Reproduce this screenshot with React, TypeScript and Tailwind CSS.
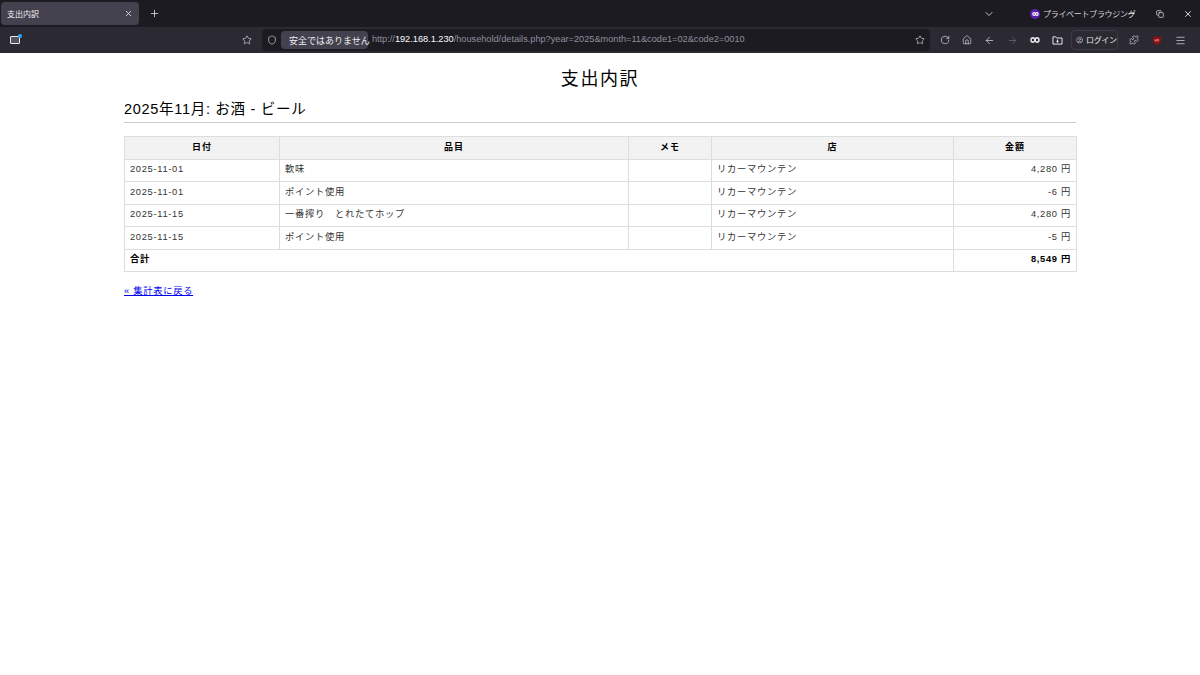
import React from 'react';
import { ChevronDown, Copy, House, Menu, Minus, Plus, RotateCw, ArrowLeft, ArrowRight, Shield, Star, X, CircleUser, Puzzle, LockOpen } from 'lucide-react';

const ROWS = [
  { date: '2025-11-01', item: '軟味', shop: 'リカーマウンテン', amount: '4,280' },
  { date: '2025-11-01', item: 'ポイント使用', shop: 'リカーマウンテン', amount: '-6' },
  { date: '2025-11-15', item: '一番搾り　とれたてホップ', shop: 'リカーマウンテン', amount: '4,280' },
  { date: '2025-11-15', item: 'ポイント使用', shop: 'リカーマウンテン', amount: '-5' },
];

function MaskIcon({ className }: { className?: string }) {
  return (
    <svg viewBox="0 0 16 10" className={className} fill="currentColor">
      <path fillRule="evenodd" d="M4.5 0C2 0 0 2.2 0 5s2 5 4.5 5C6 10 7 9 8 8c1 1 2 2 3.5 2C14 10 16 7.8 16 5s-2-5-4.500-5C10 0 9 .8 8 1.700 7 .8 6 0 4.500 0zM4.500 3a2 2 0 1 1 0 4 2 2 0 0 1 0-4zm7 0a2 2 0 1 1 0 4 2 2 0 0 1 0-4z" />
    </svg>
  );
}

function ToolSlot({ children }: { children: React.ReactNode }) {
  return <div className="flex h-full w-[22.6px] items-center justify-center text-[#e4e4e8]">{children}</div>;
}

function BrowserChrome() {
  return (
    <div className="shrink-0 font-['Noto_Sans_CJK_JP','Liberation_Sans',sans-serif]">
      {/* Tab strip */}
      <div className="flex h-[27px] items-center bg-[#1c1b22] pl-[1px] pr-[6px] text-[#f4f4f6]">
        <div className="flex h-[23px] w-[138px] items-center justify-between rounded-[4px] bg-[#42414d] pl-[6px] pr-[6px]">
          <span className="text-[8px] leading-none">支出内訳</span>
          <X size={9} strokeWidth={2} />
        </div>
        <div className="ml-[8px] flex w-[14px] justify-center">
          <Plus size={11} strokeWidth={1.6} />
        </div>
        <div className="flex-1" />
        <ChevronDown size={12} strokeWidth={1.5} />
        <div className="ml-[35px] flex items-center gap-[3px]">
          <span className="flex h-[10px] w-[10px] items-center justify-center rounded-full bg-[#5b1fb0]">
            <MaskIcon className="h-[4px] w-[7px] text-white" />
          </span>
          <span className="w-[67px] whitespace-nowrap text-[8px] leading-none tracking-[-0.3px] text-[#d8d8dc]">プライベートブラウジング</span>
        </div>
        <div className="ml-[15px] flex w-[12px] justify-center"><Minus size={9} /></div>
        <div className="ml-[17px] flex w-[12px] justify-center"><Copy size={8} /></div>
        <div className="ml-[16px] flex w-[12px] justify-center"><X size={10} /></div>
      </div>

      {/* Toolbar */}
      <div className="flex h-[26px] items-center bg-[#2b2a33] pl-[10px] pr-[9px]">
        <div className="relative h-[8px] w-[10px] rounded-[1px] border border-[#e8e8ec] bg-[#55545e]">
          <span className="absolute -right-[3px] -top-[3px] h-[4px] w-[4px] rounded-full bg-[#2aa5f5]" />
        </div>
        <div className="ml-[222px] flex w-[10px] justify-center text-[#e4e4e8]">
          <Star size={10} strokeWidth={1.5} />
        </div>
        {/* URL bar */}
        <div className="ml-[10px] flex h-[22px] w-[676px] items-center rounded-[4px] bg-[#1c1b22] pl-[5px]">
          <Shield size={10} strokeWidth={1.5} className="text-[#e4e4e8]" />
          <div className="ml-[4px] flex h-[18px] w-[87px] items-center gap-[3px] rounded-[4px] bg-[#42414d] pl-[5px]">
            <LockOpen size={10} strokeWidth={1.5} className="text-[#f0a0a8]" />
            <span className="whitespace-nowrap text-[9px] leading-none text-[#f0f0f4]">安全ではありません</span>
          </div>
          <span className="ml-[4px] whitespace-nowrap font-['Liberation_Sans',sans-serif] text-[9.2px] leading-none text-[#8f8f9d]">
            http://<span className="text-[#fbfbfe]">192.168.1.230</span>/household/details.php?year=2025&amp;month=11&amp;code1=02&amp;code2=0010
          </span>
          <div className="flex-1" />
          <Star size={10} strokeWidth={1.5} className="mr-[5px] text-[#e4e4e8]" />
        </div>
        <div className="ml-[3px] flex h-full items-center">
          <ToolSlot><RotateCw size={10} strokeWidth={1.5} /></ToolSlot>
          <ToolSlot><House size={10} strokeWidth={1.5} /></ToolSlot>
          <ToolSlot><ArrowLeft size={11} strokeWidth={1.5} /></ToolSlot>
          <ToolSlot><ArrowRight size={11} strokeWidth={1.5} className="text-[#6e6d78]" /></ToolSlot>
          <ToolSlot><MaskIcon className="h-[6px] w-[10px]" /></ToolSlot>
          <ToolSlot>
            <svg viewBox="0 0 12 11" className="h-[10px] w-[11px]" fill="none" stroke="currentColor" strokeWidth="1.1">
              <path d="M1 2h3l1 1.300h6V10H1z" />
              <path d="M6 5v3M4.700 6.800 6 8l1.300-1.200" />
            </svg>
          </ToolSlot>
        </div>
        <div className="ml-[2px] flex h-[20px] w-[47px] items-center gap-[3px] rounded-[4px] border border-[#3e3d47] pl-[4px] text-[#e8e8ec]">
          <CircleUser size={10} strokeWidth={1.5} />
          <span className="whitespace-nowrap text-[8px] leading-none tracking-[-0.3px]">ログイン</span>
        </div>
        <div className="ml-[5px] flex h-full w-[22px] items-center justify-center text-[#e4e4e8]">
          <Puzzle size={10} strokeWidth={1.5} />
        </div>
        <div className="ml-[1px] flex h-full w-[23px] items-center justify-center">
          <svg viewBox="0 0 10 11" className="h-[9px] w-[8px]">
            <path d="M5 0 10 1.500V6c0 2.500-2.500 4-5 5C2.500 10 0 8.500 0 6V1.500z" fill="#8a0f16" />
            <path d="M2.500 4v2.200h1.500V4M5.300 4v2.200h1.200c1.200 0 1.200-2.200 0-2.200z" stroke="#f4c4c4" strokeWidth=".7" fill="none" />
          </svg>
        </div>
        <div className="ml-[1px] flex h-full w-[22px] items-center justify-center text-[#e4e4e8]">
          <Menu size={11} strokeWidth={1.5} />
        </div>
      </div>
    </div>
  );
}

export default function App() {
  const th = "h-[22.500px] border border-[#dddddd] bg-[#f2f2f2] p-0 text-center align-middle text-[9px] font-bold tracking-[1px] text-black";
  const td = "h-[22.500px] border border-[#dddddd] px-[5px] py-0 align-middle text-[9.300px] tracking-[0.7px] text-[#333333]";
  return (
    <div className="flex h-[675px] w-[1200px] flex-col overflow-hidden bg-white font-['Liberation_Sans','Noto_Sans_CJK_JP',sans-serif]">
      <BrowserChrome />
      <main className="mx-auto w-[952px] text-black">
        <h1 className="mt-[13px] text-center font-['Noto_Sans_CJK_JP',sans-serif] text-[18px] font-normal leading-[22px] tracking-[1.600px]">支出内訳</h1>
        <h2 className="mt-[11px] border-b border-[#cccccc] pb-[3px] text-[14.500px] font-normal leading-[20px] tracking-[0.700px]">2025年11月: お酒 - ビール</h2>
        <table className="mt-[13px] w-[952px] table-fixed border-collapse">
          <colgroup>
            <col className="w-[155px]" />
            <col className="w-[349px]" />
            <col className="w-[83px]" />
            <col className="w-[242px]" />
            <col className="w-[123px]" />
          </colgroup>
          <thead>
            <tr>
              <th className={th}>日付</th>
              <th className={th}>品目</th>
              <th className={th}>メモ</th>
              <th className={th}>店</th>
              <th className={th}>金額</th>
            </tr>
          </thead>
          <tbody>
            {ROWS.map((row, i) => (
              <tr key={i}>
                <td className={td}>{row.date}</td>
                <td className={td}>{row.item}</td>
                <td className={td}></td>
                <td className={td}>{row.shop}</td>
                <td className={`${td} text-right`}>{row.amount} 円</td>
              </tr>
            ))}
            <tr>
              <td colSpan={4} className={`${td} font-bold text-black`}>合計</td>
              <td className={`${td} text-right font-bold text-black`}>8,549 円</td>
            </tr>
          </tbody>
        </table>
        <a href="#" className="mt-[13px] inline-block text-[9.300px] leading-[12px] tracking-[0.700px] text-[#0000ee] underline">« 集計表に戻る</a>
      </main>
    </div>
  );
}
